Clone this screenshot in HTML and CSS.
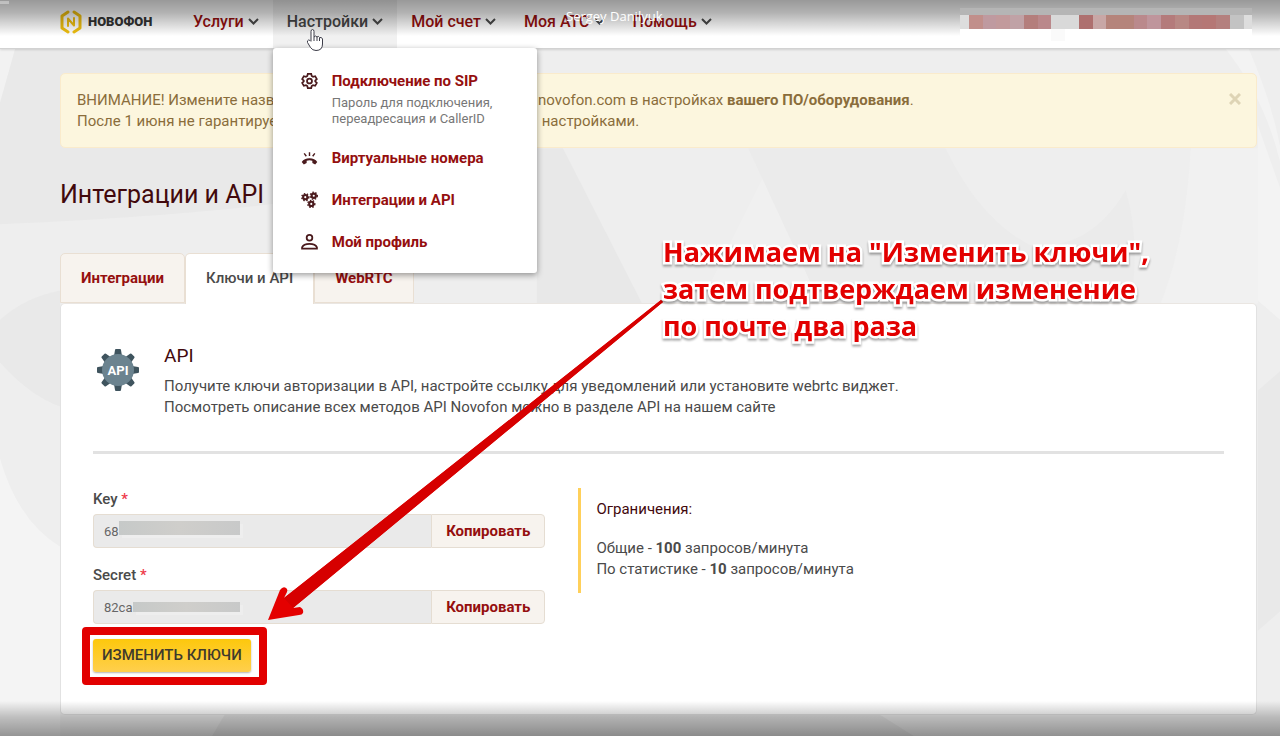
FILE: index.html
```html
<!DOCTYPE html>
<html lang="ru">
<head>
<meta charset="utf-8">
<meta name="viewport" content="width=device-width, initial-scale=1">
<title>Интеграции и API</title>
<link rel="stylesheet" href="styles.css">
</head>
<body>
<svg class="backdrop" viewBox="0 0 1280 736" preserveAspectRatio="xMidYMid slice" aria-hidden="true">
  <path fill="#f2f2f2" d="M0 49H16L0 106Z"/>
  <path fill="#e9e9e9" d="M16 49H300V200Q200 215 0 224V106Z"/>
  <path fill="#e9e9e9" d="M0 320Q25 297 61 290V406Q30 395 0 361Z"/>
  <path fill="#f4f4f4" d="M0 455Q18 520 61 546V736H0Z"/>
  <path fill="#e8e8e8" d="M537 148H563L642 303H537Z"/>
  <path fill="#f0f0f0" d="M764 175L700 303H820Z"/>
  <path fill="#ebebeb" d="M748 148H945Q980 220 1030 245Q1090 250 1125 190Q1140 240 1130 303H820Z"/>
  <path fill="#f1f1f1" d="M1190 148H1257L1257 303H1160Q1185 240 1190 148Z"/>
  <path fill="#f3f3f3" d="M1225 49H1248Q1272 105 1280 150V165Q1265 100 1225 49Z"/>
  <path fill="#f3f3f3" d="M1257 125L1280 190V320L1257 300Z"/>
  <path fill="#e9e9e9" d="M1257 390L1280 370V610L1257 630Z"/>
  <path fill="#e4e4e4" d="M225 714H880L915 736H212Z"/>
</svg>

<header class="topbar">
  <a class="logo" href="#">
    <svg width="22" height="24" viewBox="0 0 22 24" fill="none" stroke="#efbf10" stroke-width="3" stroke-linecap="round" stroke-linejoin="round">
      <path d="M8 2L2 6V18L8 22M14 2L20 6V18L14 22"/>
      <path stroke-width="2" d="M8 16V8.500L14 15.500V8"/>
    </svg>
    <span>НОВОФОН</span>
  </a>
  <nav>
    <ul class="nav">
      <li><a href="#">Услуги <svg class="caret" viewBox="0 0 11 7"><path d="M1 1L5.500 5.500L10 1"/></svg></a></li>
      <li class="open">
        <a href="#">Настройки <svg class="caret" viewBox="0 0 11 7"><path d="M1 1L5.500 5.500L10 1"/></svg></a>
        <ul class="menu">
          <li>
            <svg class="icon" viewBox="0 0 24 24"><path d="M9.600 2h4.800l.7 3 1.900 1.100 3-.9 2.300 4-2.200 2.200v1.200l2.200 2.200-2.300 4-3-.9-1.900 1.100-.7 3H9.600l-.7-3L7 17.900l-3 .9-2.300-4 2.200-2.200v-1.200L1.700 9.200l2.300-4 3 .9L8.900 5z"/><circle cx="12" cy="12" r="3.500"/></svg>
            <div><a href="#">Подключение по SIP</a><p>Пароль для подключения, переадресация и CallerID</p></div>
          </li>
          <li>
            <svg class="icon" viewBox="0 0 24 24"><path class="solid" d="M12 12.500c5 0 8.500 2 11 5L20 21l-4-2v-3q-4-1.300-8 0v3l-4 2-3-3.500c2.500-3 6-5 11-5z"/><path stroke-width="2" d="M12 4v5M4.500 5.500l3 4M19.500 5.500l-3 4"/></svg>
            <a href="#">Виртуальные номера</a>
          </li>
          <li>
            <svg class="icon" viewBox="0 0 24 24"><g stroke-width="3"><circle cx="6" cy="8" r="3"/><circle cx="18" cy="6" r="3"/><circle cx="14.500" cy="17.500" r="3"/></g><g stroke-width="2" stroke-dasharray="2 2.200"><circle cx="6" cy="8" r="5"/><circle cx="18" cy="6" r="5"/><circle cx="14.500" cy="17.500" r="5"/></g></svg>
            <a href="#">Интеграции и API</a>
          </li>
          <li>
            <svg class="icon" viewBox="0 0 24 24"><circle cx="12" cy="6" r="4"/><path d="M1.500 21.500v-2q2-5 10.500-5t10.500 5v2z"/></svg>
            <a href="#">Мой профиль</a>
          </li>
        </ul>
      </li>
      <li><a href="#">Мой счет <svg class="caret" viewBox="0 0 11 7"><path d="M1 1L5.500 5.500L10 1"/></svg></a></li>
      <li><a href="#">Моя АТС <svg class="caret" viewBox="0 0 11 7"><path d="M1 1L5.500 5.500L10 1"/></svg></a></li>
      <li><a href="#">Помощь <svg class="caret" viewBox="0 0 11 7"><path d="M1 1L5.500 5.500L10 1"/></svg></a></li>
    </ul>
  </nav>
  <svg class="account" width="292" height="33" viewBox="0 0 292 33" shape-rendering="crispEdges" aria-hidden="true">
    <path fill="#fff" d="M0 20h292v13H0z"/><path fill="#fafafa" d="M91 20h14v13H91z"/>
    <path fill="#ddd" d="M0 7h9v14H0zM284 7h8v14h-8z"/>
    <path fill="#c18f8b" d="M9 7h14v14H9z"/><path fill="#bf9aa0" d="M23 7h13v14H23z"/>
    <path fill="#c29a9c" d="M36 7h14v14H36z"/><path fill="#c0a2a6" d="M50 7h14v14H50z"/>
    <path fill="#b47e7c" d="M64 7h14v14H64z"/><path fill="#ba888b" d="M78 7h13v14H78z"/>
    <path fill="#d9d9d9" d="M91 7h28v14H91z"/><path fill="#ae706f" d="M119 7h14v14h-14z"/>
    <path fill="#c8a7a6" d="M133 7h13v14h-13z"/><path fill="#b5847b" d="M146 7h28v14h-28z"/>
    <path fill="#ba898c" d="M174 7h13v14h-13z"/><path fill="#bf959c" d="M187 7h14v14h-14z"/>
    <path fill="#b47b7b" d="M201 7h14v14h-14z"/><path fill="#b88884" d="M215 7h14v14h-14z"/>
    <path fill="#b37877" d="M229 7h13v14h-13z"/><path fill="#b57775" d="M242 7h14v14h-14z"/>
    <path fill="#b4807e" d="M256 7h14v14h-14z"/><path fill="#c3c3c3" d="M270 7h14v14h-14z"/>
    <path fill="#b5b5b5" d="M0 0h292v7H0z"/>
  </svg>
</header>

<main>
  <div class="alert">
    <p><span class="lead">ВНИМАНИЕ! Измените название</span>novofon.com в настройках <b>вашего ПО/оборудования</b>.<br>
    <span class="lead">После 1 июня не гарантируется</span> настройками.</p>
    <button class="close" type="button" aria-label="Закрыть"><svg width="12" height="12" viewBox="0 0 12 12"><path d="M1 1L11 11M11 1L1 11"/></svg></button>
  </div>

  <h1>Интеграции и API</h1>

  <div class="tabs">
    <a href="#">Интеграции</a>
    <a class="active" href="#">Ключи и API</a>
    <a href="#">WebRTC</a>
  </div>

  <section class="card">
    <div class="intro">
      <svg width="44" height="44" viewBox="0 0 44 44" aria-hidden="true">
        <g fill="#3f545e">
          <path id="tooth" d="M18 8L19 2Q19 1 20 1H24Q25 1 25 2L26 8V36L25 42Q25 43 24 43H20Q19 43 19 42L18 36Z"/>
          <use href="#tooth" transform="rotate(45 22 22)"/><use href="#tooth" transform="rotate(90 22 22)"/><use href="#tooth" transform="rotate(135 22 22)"/>
        </g>
        <circle cx="22" cy="22" r="16" fill="#6b838f"/>
        <text x="22" y="27" text-anchor="middle" class="gear-label">API</text>
      </svg>
      <div>
        <h2>API</h2>
        <p>Получите ключи авторизации в API, настройте ссылку для уведомлений или установите webrtc виджет.<br>Посмотреть описание всех методов API Novofon можно в разделе API на нашем сайте</p>
      </div>
    </div>
    <hr>
    <div class="columns">
      <form>
        <div class="field">
          <label for="key">Key <i>*</i></label>
          <div class="group"><input id="key" type="text" value="68" readonly><span class="mask mask-key"></span><button type="button">Копировать</button></div>
        </div>
        <div class="field">
          <label for="secret">Secret <i>*</i></label>
          <div class="group"><input id="secret" type="text" value="82ca" readonly><span class="mask mask-secret"></span><button type="button">Копировать</button></div>
        </div>
        <div class="submit"><button class="primary" type="button">ИЗМЕНИТЬ КЛЮЧИ</button></div>
      </form>
      <aside>
        <h3>Ограничения:</h3>
        <p>Общие - <b>100</b> запросов/минута<br>По статистике - <b>10</b> запросов/минута</p>
      </aside>
    </div>
  </section>
</main>

<div class="shade shade-top"></div>
<div class="shade shade-bottom"></div>
<div class="presenter">Sergey Danilyuk</div>
<svg class="pointer" width="20" height="24" viewBox="0 0 20 24"><path d="M6 13V3.500Q6 1.500 7.500 1.500T9 3.500V9Q10.500 7 12 9Q13.500 7.500 14.500 9.500Q17 9 17.500 11V16Q17.500 22.500 11 22.500Q7.500 22.500 5.500 19.500L2.500 14.500Q2 12.500 3.500 12Q5 12 6 13.500M9 9V13M12 9V13M14.500 10V13"/></svg>
<svg class="arrow" width="396" height="322" viewBox="0 0 396 322" aria-hidden="true">
  <defs><linearGradient id="shaft" gradientUnits="userSpaceOnUse" x1="150" y1="170" x2="161" y2="184"><stop offset="0" stop-color="#f40000"/><stop offset="1" stop-color="#d60000"/></linearGradient></defs>
  <path fill="#e40000" d="M394 0L396 2L26 308L33 307Q37 309 36 313Q35 315 32 315L1 320L13 290Q16 286 19 288Q21 289 20 292L17 298Z"/>
  <path fill="url(#shaft)" d="M394 0L396 2L26 308L17 298Z"/>
</svg>
<p class="note">Нажимаем на "Изменить ключи",<br>затем подтверждаем изменение<br>по почте два раза</p>
</body>
</html>
```
FILE: styles.css
```css
* { box-sizing: border-box; }
body {
  margin: 0;
  min-height: 100vh;
  position: relative;
  overflow: hidden;
  background: #eee;
  color: #4a4a4a;
  font: 15px/21px Roboto, sans-serif;
}
h1, h2, h3, p, ul { margin: 0; padding: 0; font-weight: 400; }
ul { list-style: none; }
a { color: #950f0f; text-decoration: none; }
b { font-weight: 700; }
button, input { font: inherit; color: inherit; }

.backdrop { position: absolute; inset: 0; width: 100%; height: 100%; z-index: -1; }

.topbar {
  display: flex;
  height: 49px;
  padding: 0 28px 0 60px;
  background: #fff;
  border-bottom: 1px solid #d2d2d2;
  box-shadow: 0 1px 2px rgba(0, 0, 0, .12);
}
.logo {
  display: flex;
  align-items: center;
  gap: 6px;
  width: 119px;
  padding-bottom: 4px;
  color: #333;
  font: 900 13px/20px Roboto, sans-serif;
}
.nav { display: flex; height: 100%; }
.nav > li { position: relative; }
.nav > li > a {
  display: flex;
  align-items: center;
  gap: 4px;
  height: 100%;
  padding: 0 14px 5px;
  font-size: 16px;
  font-weight: 500;
}
.nav > .open { background: #f1f1f1; }
.nav > .open > a { color: #444; }
.caret { width: 11px; height: 7px; fill: none; stroke: #4a4a4a; stroke-width: 2; }
.account { margin: 8px 0 0 auto; position: relative; z-index: 4; }

.menu {
  position: absolute;
  z-index: 3;
  top: 100%;
  left: 0;
  display: flex;
  flex-direction: column;
  gap: 21px;
  width: 264px;
  padding: 23px 28px 20px;
  background: #fff;
  border-radius: 3px;
  box-shadow: 0 2px 6px rgba(0, 0, 0, .4);
}
.menu li { display: flex; gap: 14px; }
.menu a { font-weight: 700; }
.menu p { margin-top: 3px; color: #777; font-size: 13px; line-height: 16px; }
.icon { flex: none; width: 17px; height: 20px; fill: none; stroke: #4a1a1d; stroke-width: 2.5; }
.icon .solid { fill: #4a1a1d; stroke: none; }

main { padding: 24px 23px 22px 60px; }
.alert {
  display: flex;
  justify-content: space-between;
  align-items: flex-start;
  padding: 16px 15px 15px 16px;
  background: #fcf6de;
  border: 1px solid #faebcc;
  border-radius: 5px;
  color: #8a6d3b;
}
.lead { display: inline-block; width: 461px; white-space: nowrap; }
.close { display: flex; padding: 3px 0; background: none; border: 0; }
.close path { stroke: #ded4b5; stroke-width: 3; }
h1 { margin: 32px 0 43px; color: #42090d; font-size: 25px; line-height: 30px; }

.tabs { display: flex; }
.tabs a {
  height: 50px;
  padding: 14px 20px;
  background: #f7f3ee;
  border: 1px solid #e9dfd3;
  border-radius: 5px 5px 0 0;
  font-weight: 700;
}
.tabs .active { height: 51px; margin-bottom: -1px; background: #fff; border-bottom: 0; color: #4a4a4a; font-weight: 500; position: relative; }

.card {
  min-height: 411px;
  padding: 41px 32px 42px;
  background: #fff;
  border: 1px solid #e2e2e2;
  border-top-color: #eae6e2;
  border-radius: 5px;
}
.intro { display: flex; gap: 24px; padding-left: 3px; }
.intro > svg { flex: none; margin-top: 3px; }
.gear-label { fill: #fff; font: 700 13px Roboto, sans-serif; }
h2 { margin-bottom: 10px; color: #42090d; font-size: 19px; line-height: 21px; }
hr { height: 3px; margin: 33px 0 34px; border: 0; background: #e2e2e2; }
.columns { display: grid; grid-template-columns: 2fr 3fr; align-items: start; }
.field { margin-bottom: 16px; }
label { display: block; margin-bottom: 4px; line-height: 22px; font-weight: 500; }
label i { color: #ee3a4a; font-style: normal; }
.group { display: flex; position: relative; }
.group input {
  flex: 1;
  min-width: 0;
  height: 34px;
  padding: 0 10px;
  background: #eaeaea;
  border: 1px solid #e5ddd2;
  border-right: 0;
  border-radius: 4px 0 0 4px;
  color: #666;
  font-size: 13px;
}
.group button {
  padding: 0 14px;
  background: #f7f3ee;
  border: 1px solid #e5ddd2;
  border-radius: 0 4px 4px 0;
  color: #950f0f;
  font-weight: 700;
}
.mask { position: absolute; background: linear-gradient(90deg, #c6c9c8, #cfcecb 50%, #c8c9c9); box-shadow: 3px 3px 0 #eee; }
.mask-key { left: 26px; top: 7px; width: 121px; height: 14px; }
.mask-secret { left: 40px; top: 12px; width: 107px; height: 10px; }
.submit {
  position: relative;
  width: max-content;
  margin-top: -1px;
}
.submit::after {
  content: "";
  position: absolute;
  inset: -12px -16px -13px -11px;
  border: 8px solid #e20000;
  border-radius: 4px;
}
.primary {
  display: block;
  height: 33px;
  padding: 0 9px;
  background: linear-gradient(#fdc80c, #ffcf4d);
  border: 0;
  border-radius: 3px;
  box-shadow: 0 1px 2px rgba(0, 0, 0, .3);
  color: #3f3a2c;
  font-weight: 500;
}
aside { margin-left: 33px; padding: 11px 15px 13px; border-left: 3px solid #ffd05a; }
h3 { margin-bottom: 18px; color: #42090d; font-size: 15px; line-height: 21px; }

.shade { position: absolute; left: 0; right: 0; z-index: 3; pointer-events: none; }
.shade-top { top: 0; height: 36px; background: linear-gradient(rgba(0, 0, 0, .4), rgba(0, 0, 0, .3) 35%, transparent); }
.shade-top::before { content: ""; position: absolute; left: 0; top: 1px; width: 9px; height: 3px; background: rgba(255, 255, 255, .35); }
.shade-bottom { bottom: 0; height: 36px; background: linear-gradient(transparent, rgba(0, 0, 0, .22) 45%, rgba(0, 0, 0, .4)); }
.presenter {
  position: absolute;
  z-index: 5;
  top: 6px;
  left: 566px;
  color: #fff;
  font: 13px/20px "Open Sans", sans-serif;
}
.pointer { position: absolute; z-index: 5; left: 305px; top: 28px; fill: #fff; stroke: #3c3c48; }
.arrow { position: absolute; z-index: 5; left: 267px; top: 300px; }
.note {
  position: absolute;
  z-index: 6;
  left: 663px;
  top: 233px;
  color: #e20000;
  font: 700 27px/37px "Open Sans", sans-serif;
  white-space: nowrap;
  paint-order: stroke fill;
  -webkit-text-stroke: 5px #fff;
  filter: drop-shadow(0 2px 1px rgba(0, 0, 0, .35));
}
```
